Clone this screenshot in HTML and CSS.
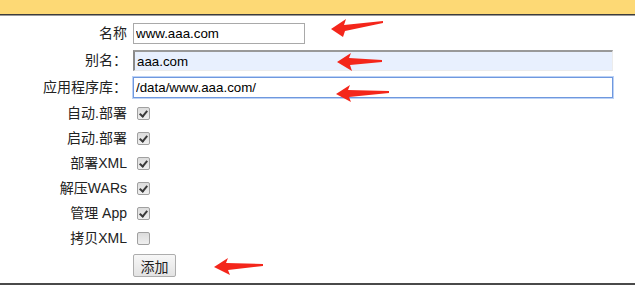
FILE: index.html
```html
<!DOCTYPE html>
<html lang="zh-CN">
  <head>
    <meta charset="UTF-8" />
    <meta name="viewport" content="width=device-width, initial-scale=1.0" />
    <title>添加主机</title>
    <link rel="stylesheet" href="styles.css">
  </head>
  <body>
    <div class="topbar"></div>

    <form class="host-form">
      <div class="row row-input">
        <label class="label">名称</label>
        <input class="text text-short" type="text" value="www.aaa.com" />
      </div>
      <div class="row row-input">
        <label class="label">别名：</label>
        <input class="text text-long text-filled" type="text" value="aaa.com" />
      </div>
      <div class="row row-input">
        <label class="label">应用程序库：</label>
        <input class="text text-long text-focus" type="text" value="/data/www.aaa.com/" />
      </div>

      <div class="checks">
        <div class="row row-check">
          <label class="label">自动.部署</label>
          <input class="check" type="checkbox" checked />
        </div>
        <div class="row row-check">
          <label class="label">启动.部署</label>
          <input class="check" type="checkbox" checked />
        </div>
        <div class="row row-check">
          <label class="label">部署XML</label>
          <input class="check" type="checkbox" checked />
        </div>
        <div class="row row-check">
          <label class="label">解压WARs</label>
          <input class="check" type="checkbox" checked />
        </div>
        <div class="row row-check">
          <label class="label">管理 App</label>
          <input class="check" type="checkbox" checked />
        </div>
        <div class="row row-check">
          <label class="label">拷贝XML</label>
          <input class="check" type="checkbox" />
        </div>
      </div>

      <div class="row row-button">
        <span class="label"></span>
        <button class="btn" type="button">添加</button>
      </div>
    </form>

    <div class="bottom-line"></div>

    <!-- 标注箭头 -->
    <svg class="marks" width="635" height="295" viewBox="0 0 635 295">
      <path d="M331 29 L346 19 L344 25 L383 21 L383 23 L345 31 L343 37 Z" />
      <path d="M337 62 L351 53 L349 58 L382 60 L382 62 L350 65 L352 71 Z" />
      <path d="M336 94 L350 85 L348 90 L389 91 L389 93 L349 97 L351 102 Z" />
      <path d="M214 267 L228 258 L226 263 L263 264 L263 266 L228 270 L230 275 Z" />
    </svg>
  </body>
</html>
```

FILE: styles.css
```css
body {
  margin: 0;
  background-color: #fff;
  font-family: "Liberation Sans", "Noto Sans CJK SC", sans-serif;
  font-size: 14px;
  color: #222;
  position: relative;
  height: 295px;
  overflow: hidden;
}

.topbar {
  height: 14px;
  background-color: #fdd975;
  border-bottom: 1px solid #3c3c3c;
  box-shadow: 0 1px 0 #9a9a9a;
}

.host-form {
  display: flex;
  flex-direction: column;
  padding-top: 8px;
}

.row {
  display: flex;
  align-items: center;
}

.row-input {
  height: 21px;
  margin-bottom: 6px;
}

.checks {
  display: flex;
  flex-direction: column;
  margin-top: -3px;
}

.row-check {
  height: 25px;
}

.row-button {
  margin-top: 3px;
}

.label {
  width: 127px;
  flex-shrink: 0;
  margin-right: 6px;
  text-align: right;
  line-height: 21px;
  white-space: nowrap;
}

.text {
  box-sizing: border-box;
  height: 21px;
  margin: 0;
  padding: 1px 2px;
  font-family: "Liberation Sans", sans-serif;
  font-size: 13.33px;
  color: #000;
  background-color: #fff;
  outline: none;
}

.text-short {
  width: 172px;
  border: 1px solid #a9a9a9;
}

.text-long {
  width: 480px;
}

.text-filled {
  background-color: #e8f0fe;
  border-style: solid;
  border-width: 2px 1px 1px 2px;
  border-color: #999 #ececec #ececec #8a8a8a;
}

.text-focus {
  border: 1px solid #6f98de;
  box-shadow: 0 0 0 1px #bcd2f6;
}

.check {
  appearance: none;
  -webkit-appearance: none;
  box-sizing: border-box;
  width: 13px;
  height: 13px;
  margin: 0 0 0 4px;
  border: 1px solid #a0a0a0;
  border-radius: 2px;
  background: linear-gradient(#dcdcdc, #efefef);
  position: relative;
}

/* 勾选标记 */
.check:checked::after {
  content: "";
  position: absolute;
  left: 3px;
  top: 1px;
  width: 3px;
  height: 6px;
  border-right: 2px solid #3a3a3a;
  border-bottom: 2px solid #3a3a3a;
  transform: rotate(40deg);
}

.btn {
  box-sizing: border-box;
  width: 43px;
  height: 23px;
  padding: 0;
  font-family: "Noto Sans CJK SC", sans-serif;
  font-size: 14px;
  color: #222;
  border: 1px solid #adadad;
  border-radius: 2px;
  background: linear-gradient(#f7f7f7, #e3e3e3);
}

.bottom-line {
  margin-top: 6px;
  border-top: 2px solid #4a4a4a;
}

.marks {
  position: absolute;
  top: 0;
  left: 0;
  pointer-events: none;
}

.marks path {
  fill: #f4261b;
}
```
